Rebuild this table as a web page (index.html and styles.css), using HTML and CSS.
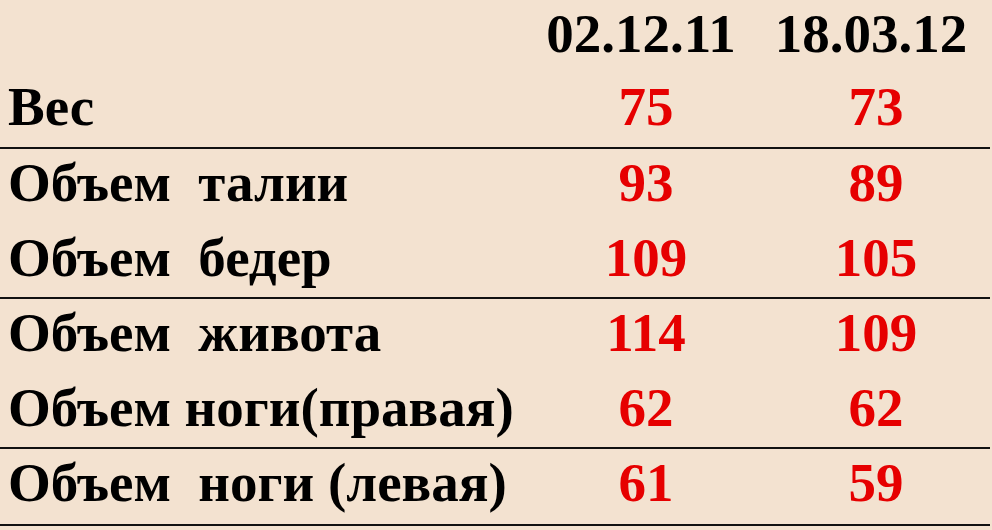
FILE: index.html
```
<!DOCTYPE html>
<html lang="ru">
<head>
<meta charset="utf-8">
<link rel="stylesheet" href="styles.css">
</head>
<body>
<div class="sheet">
  <div class="row head">
    <div class="label"></div>
    <div class="date">02.12.11</div>
    <div class="date">18.03.12</div>
  </div>
  <div class="row lined first">
    <div class="label">Вес</div>
    <div class="val">75</div>
    <div class="val">73</div>
  </div>
  <div class="row">
    <div class="label">Объем  талии</div>
    <div class="val">93</div>
    <div class="val">89</div>
  </div>
  <div class="row lined">
    <div class="label">Объем  бедер</div>
    <div class="val">109</div>
    <div class="val">105</div>
  </div>
  <div class="row">
    <div class="label">Объем  живота</div>
    <div class="val">114</div>
    <div class="val">109</div>
  </div>
  <div class="row lined">
    <div class="label">Объем ноги(правая)</div>
    <div class="val">62</div>
    <div class="val">62</div>
  </div>
  <div class="row lined last">
    <div class="label">Объем  ноги (левая)</div>
    <div class="val">61</div>
    <div class="val">59</div>
  </div>
</div>
</body>
</html>
```
FILE: styles.css
```
html, body {
  margin: 0;
  padding: 0;
  background: #f3e2d0;
}
body {
  width: 992px;
  height: 530px;
  overflow: hidden;
  font-family: "Liberation Serif", "Times New Roman", serif;
  font-weight: bold;
  font-size: 55px;
  color: #000;
}
.sheet {
  width: 990px;
}
.row {
  display: grid;
  grid-template-columns: 530px 232px 228px;
  height: 75px;
  line-height: 68px;
  box-sizing: border-box;
}
.row.head {
  height: 73px;
  line-height: 67px;
}
.row.lined {
  border-bottom: 2px solid #111;
}
.row.first {
  height: 76px;
}
.row.last {
  height: 77px;
}
.label {
  padding-left: 8px;
  white-space: pre;
}
.date {
  text-align: center;
  padding-right: 10px;
  white-space: nowrap;
}
.val {
  text-align: center;
  color: #e60000;
}
```
